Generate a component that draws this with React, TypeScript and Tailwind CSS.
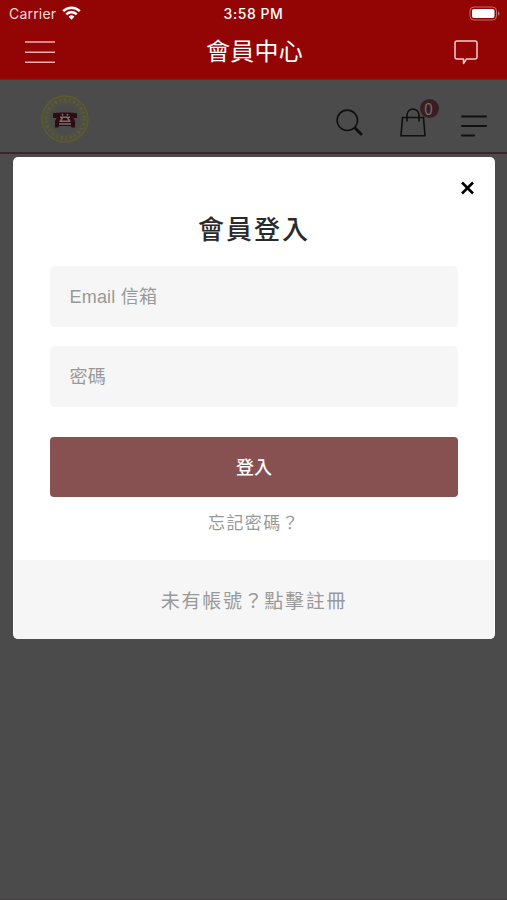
import React, { useState } from 'react';

const StatusBar: React.FC = () => (
  <div className="relative h-[27px] flex items-center justify-between pl-[9px] pr-[7px] text-white font-['Inter','Liberation_Sans',sans-serif]">
    <div className="flex items-center gap-[6px]">
      <span className="text-[14px] leading-none text-[#fbdcdc] tracking-[0.2px]">Carrier</span>
      <svg className="w-[19px] h-[14px] -mt-[2px]" viewBox="0 0 19 14" fill="none" stroke="currentColor" strokeWidth="2.6">
        <path d="M1.2 5.1a11.8 11.8 0 0 1 16.6 0" />
        <path d="M4.3 8.3a7.4 7.4 0 0 1 10.4 0" />
        <path d="M9.5 13.8 6.6 10.8a4.1 4.1 0 0 1 5.8 0z" fill="currentColor" stroke="none" />
      </svg>
    </div>
    <span className="absolute left-1/2 top-[7px] -translate-x-1/2 text-[14px] leading-none font-medium tracking-[0.55px] whitespace-nowrap">3:58 PM</span>
    <svg className="w-[31px] h-[15px]" viewBox="0 0 31 15" fill="none">
      <rect x="1" y="1" width="26.5" height="13" rx="4" stroke="#c46f6f" />
      <rect x="3" y="3" width="22.5" height="9" rx="2" fill="#fff" />
      <path d="M29 5.5v4c1-.3 1.5-1 1.5-2s-.5-1.7-1.5-2z" fill="#c46f6f" />
    </svg>
  </div>
);

const NavBar: React.FC = () => (
  <div className="h-[52px] flex items-center justify-between pl-[25px] pr-[29px] pb-[3px] text-white">
    <button className="w-[30px] h-[24px]" aria-label="選單">
      <svg className="w-[30px] h-[24px]" viewBox="0 0 30 24" stroke="#f0b0b0" strokeWidth="1.5">
        <path d="M0 2h30M0 12.2h30M0 22.3h30" />
      </svg>
    </button>
    <h1 className="text-[24px] leading-none tracking-[0.3px]">會員中心</h1>
    <button className="mt-[2px]" aria-label="訊息">
      <svg className="w-[24px] h-[25px]" viewBox="0 0 24 25" fill="none" stroke="#f6cccc" strokeWidth="1.5" strokeLinejoin="round">
        <path d="M3 1h18a2 2 0 0 1 2 2v14a2 2 0 0 1-2 2h-8.5L9.5 23.5V19H3a2 2 0 0 1-2-2V3a2 2 0 0 1 2-2z" />
      </svg>
    </button>
  </div>
);

const ShopLogo: React.FC = () => (
  <svg className="w-[50px] h-[50px]" viewBox="0 0 50 50" fill="none">
    <circle cx="25" cy="25" r="19.5" stroke="#4f4f42" strokeWidth="7" />
    <circle cx="25" cy="25" r="23" stroke="#5c5c2c" strokeWidth="1.3" />
    <circle cx="25" cy="25" r="19" stroke="#5a5a3c" strokeWidth="3.5" strokeDasharray="1.4 2.6 2.2 3.1" />
    <circle cx="25" cy="25" r="15.5" stroke="#52523f" strokeWidth="0.8" />
    <path
      d="M13 19.5c2-1.3 22-1.3 24 0v4.5h-3.5l1.5 3v6.5h-3L30.5 32h-11L18 33.5h-3V27l1.5-3H13z"
      fill="#300b11"
    />
    <path d="M22 20l1 1.5M28 20l-1 1.5M20 23.2h10M23 23l-2.5 4M27 23l2.500 4M19.500 27.200h11M19 30h12" stroke="#777072" strokeWidth="1.5" />
  </svg>
);

const ShopHeader: React.FC = () => (
  <div className="h-[75px] flex items-start justify-between border-t border-b-2 border-t-[#61292a] border-b-[#3b2629] bg-[#4b4b4b] pl-[40px] pr-[20px]">
    <div className="mt-[14px]">
      <ShopLogo />
    </div>
    <div className="flex items-start text-[#101010]">
      <svg className="w-[27px] h-[27px] mt-[29px]" viewBox="0 0 27 27" fill="none" stroke="currentColor">
        <circle cx="11.3" cy="11.3" r="10.2" strokeWidth="1.6" />
        <path d="M18.5 18.5l1.5 1.5" strokeWidth="1.8" />
        <path d="M19.5 19.5l5.5 5.5" strokeWidth="3" strokeLinecap="round" />
      </svg>
      <div className="relative ml-[37px] mt-[28px]">
        <svg className="w-[26px] h-[29px]" viewBox="0 0 26 29" fill="none" stroke="currentColor" strokeWidth="1.6">
          <path d="M2.5 9.5h21L25 27.7H1z" />
          <path d="M7 13.5V7a6 6 0 0 1 12 0v6.5" />
        </svg>
        <span className="absolute -top-[9px] left-[20px] flex h-[19px] w-[19px] items-center justify-center rounded-full bg-[#391f23] pr-[2px] pb-[2px] text-[16px] leading-none text-[#77696b] font-['Noto_Sans_CJK_TC',sans-serif]">
          0
        </span>
      </div>
      <svg className="w-[26px] h-[22px] ml-[35px] mt-[35px]" viewBox="0 0 26 22" stroke="currentColor" strokeWidth="2" strokeLinecap="round">
        <path d="M1 1.5h24M1 11h24M1 20.5h12" />
      </svg>
    </div>
  </div>
);

const LoginModal: React.FC = () => {
  const [email, setEmail] = useState('');
  const [password, setPassword] = useState('');

  return (
    <div className="mx-[13px] mt-[3px] h-[482px] w-[482px] flex flex-col overflow-hidden rounded-[5px] bg-white">
      <div className="flex justify-end pt-[24px] pr-[21px]">
        <button className="block h-[14px] w-[13px]" aria-label="關閉">
          <svg className="w-[13px] h-[14px]" viewBox="0 0 13 14" stroke="#000" strokeWidth="2.6">
            <path d="M1 1.5l11 11M12 1.5l-11 11" />
          </svg>
        </button>
      </div>
      <h2 className="mt-[18px] h-[32px] text-center text-[26px] leading-[34px] font-medium tracking-[2px] text-[#2a2a2a]">會員登入</h2>

      <div className="flex flex-col px-[37px] pt-[20.5px]">
        <input
          type="text"
          placeholder="Email 信箱"
          value={email}
          onChange={(e) => setEmail(e.target.value)}
          className="h-[61px] rounded-[5px] bg-[#f6f6f6] px-[19.5px] pt-[3px] text-[18px] tracking-[0.2px] text-[#333] placeholder:text-[#999] outline-none"
        />
        <input
          type="password"
          placeholder="密碼"
          value={password}
          onChange={(e) => setPassword(e.target.value)}
          className="mt-[19px] h-[61px] rounded-[5px] bg-[#f6f6f6] px-[19.5px] pt-[3px] text-[18px] tracking-[0.2px] text-[#333] placeholder:text-[#999] outline-none"
        />
        <button className="mt-[30px] h-[60px] rounded-[4px] bg-[#875151] pt-[3px] text-[18px] font-medium text-white">登入</button>
        <a href="#" className="mt-[15.5px] text-center text-[17px] leading-[24px] tracking-[1.4px] text-[#999]">忘記密碼？</a>
      </div>

      <div className="mx-px mt-auto h-[79px] flex items-center justify-center bg-[#f6f6f6] pt-[3px]">
        <a href="#" className="text-[19px] leading-none tracking-[1.7px] text-[#999]">未有帳號？點擊註冊</a>
      </div>
    </div>
  );
};

const App: React.FC = () => {
  return (
    <div className="h-[900px] w-[507px] overflow-hidden border-b border-b-[#473f43] bg-[#4b4b4b] font-['Liberation_Sans','Noto_Sans_CJK_TC',sans-serif]">
      <div className="bg-[#920504]">
        <StatusBar />
        <NavBar />
      </div>
      <ShopHeader />
      <LoginModal />
    </div>
  );
};

export default App;
